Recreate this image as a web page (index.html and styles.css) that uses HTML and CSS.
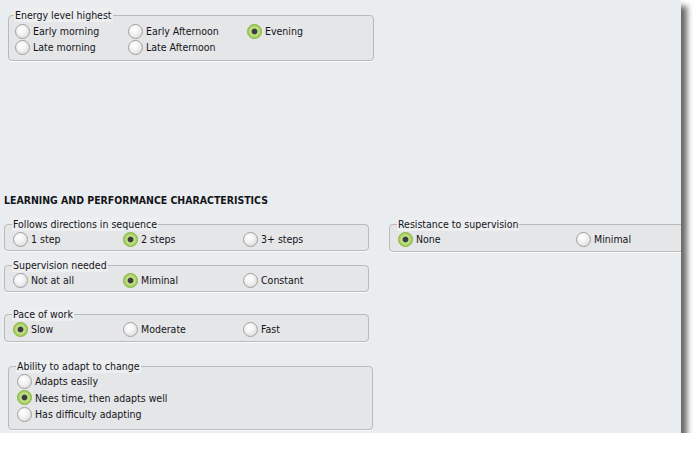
FILE: index.html
```html
<!DOCTYPE html>
<html lang="en">

<head>
  <meta charset="UTF-8">
  <title>Learning profile</title>
  <link rel="stylesheet" href="styles.css">
</head>

<body>
  <div class="panel">
    <fieldset class="group group--energy">
      <legend>Energy level highest</legend>
      <div class="options options--energy">
        <label class="option"><input type="radio" name="energy"><span>Early morning</span></label>
        <label class="option"><input type="radio" name="energy"><span>Early Afternoon</span></label>
        <label class="option"><input type="radio" name="energy" checked><span>Evening</span></label>
        <label class="option"><input type="radio" name="energy"><span>Late morning</span></label>
        <label class="option"><input type="radio" name="energy"><span>Late Afternoon</span></label>
      </div>
    </fieldset>

    <h2 class="section-title">LEARNING AND PERFORMANCE CHARACTERISTICS</h2>

    <div class="columns">
      <div class="column">
        <fieldset class="group group--follows">
          <legend>Follows directions in sequence</legend>
          <div class="options options--three">
            <label class="option"><input type="radio" name="follows"><span>1 step</span></label>
            <label class="option"><input type="radio" name="follows" checked><span>2 steps</span></label>
            <label class="option"><input type="radio" name="follows"><span>3+ steps</span></label>
          </div>
        </fieldset>

        <fieldset class="group group--supervision">
          <legend>Supervision needed</legend>
          <div class="options options--three">
            <label class="option"><input type="radio" name="supervision"><span>Not at all</span></label>
            <label class="option"><input type="radio" name="supervision" checked><span>Miminal</span></label>
            <label class="option"><input type="radio" name="supervision"><span>Constant</span></label>
          </div>
        </fieldset>

        <fieldset class="group group--pace">
          <legend>Pace of work</legend>
          <div class="options options--three">
            <label class="option"><input type="radio" name="pace" checked><span>Slow</span></label>
            <label class="option"><input type="radio" name="pace"><span>Moderate</span></label>
            <label class="option"><input type="radio" name="pace"><span>Fast</span></label>
          </div>
        </fieldset>

        <fieldset class="group group--adapt">
          <legend>Ability to adapt to change</legend>
          <div class="options options--stack">
            <label class="option"><input type="radio" name="adapt"><span>Adapts easily</span></label>
            <label class="option"><input type="radio" name="adapt" checked><span>Nees time, then adapts well</span></label>
            <label class="option"><input type="radio" name="adapt"><span>Has difficulty adapting</span></label>
          </div>
        </fieldset>
      </div>

      <div class="column">
        <fieldset class="group group--resistance">
          <legend>Resistance to supervision</legend>
          <div class="options options--two">
            <label class="option"><input type="radio" name="resistance" checked><span>None</span></label>
            <label class="option"><input type="radio" name="resistance"><span>Minimal</span></label>
          </div>
        </fieldset>
      </div>
    </div>
  </div>
</body>

</html>
```

FILE: styles.css
```css
html,
body {
  margin: 0;
  background: #ffffff;
  font-family: "DejaVu Sans Condensed", "Liberation Sans", sans-serif;
  font-size: 10.5px;
  color: #141418;
}

.panel {
  box-sizing: border-box;
  width: 681px;
  height: 433px;
  padding: 8px 0 0 4px;
  overflow: hidden;
  background: #eaedf0;
  box-shadow: 6px 6px 6px rgba(0, 0, 0, 0.6);
}

/* group boxes */
.group {
  box-sizing: border-box;
  width: 365px;
  margin: 0;
  padding: 0 4px 3px 8px;
  border: 1px solid #b9babb;
  border-radius: 4px;
  background: #e5e6e8;
  box-shadow: 0 1px 0 #fbfbfb;
  min-width: 0;
}

.group legend {
  margin-left: -1px;
  padding: 0 1px;
  height: 14px;
  line-height: 14px;
  background: #eceef0;
}

.group--energy {
  margin-left: 4px;
  width: 366px;
  padding: 1px 4px 5px 6px;
}

.group--supervision {
  margin-top: 7px;
}

.group--pace {
  margin-top: 15px;
  padding-bottom: 4px;
}

.group--adapt {
  margin: 17px 0 0 4px;
  padding: 0 4px 6px 8px;
}

.group--resistance {
  width: 330px;
  padding: 0 4px 4px 8px;
}

/* options */
.options {
  display: grid;
  grid-auto-rows: 16px;
}

.options--energy {
  grid-template-columns: 113px 119px auto;
}

.options--three {
  grid-template-columns: 110px 120px auto;
}

.options--two {
  grid-template-columns: 178px auto;
}

.options--stack {
  grid-auto-rows: 16.5px;
}

.option {
  display: flex;
  align-items: center;
  white-space: nowrap;
}

.option input {
  appearance: none;
  box-sizing: border-box;
  width: 15px;
  height: 15px;
  margin: 0 3px 0 0;
  flex: none;
  border: 1px solid #a0a0a0;
  border-radius: 50%;
  background: radial-gradient(circle at 40% 35%, #ffffff 0%, #f3f3f3 40%, #d2d2d2 100%);
}

.option input:checked {
  border-color: #83b13d;
  background: radial-gradient(circle, #3c3c3c 0 2.4px, #c6e493 3.4px, #acd364 60%, #96c24b 100%);
}

/* section heading */
.section-title {
  margin: 133px 0 11px;
  font-size: 10.45px;
  line-height: 12px;
  font-weight: bold;
}

.columns {
  display: grid;
  grid-template-columns: 369px 1fr;
  column-gap: 16px;
}
```
